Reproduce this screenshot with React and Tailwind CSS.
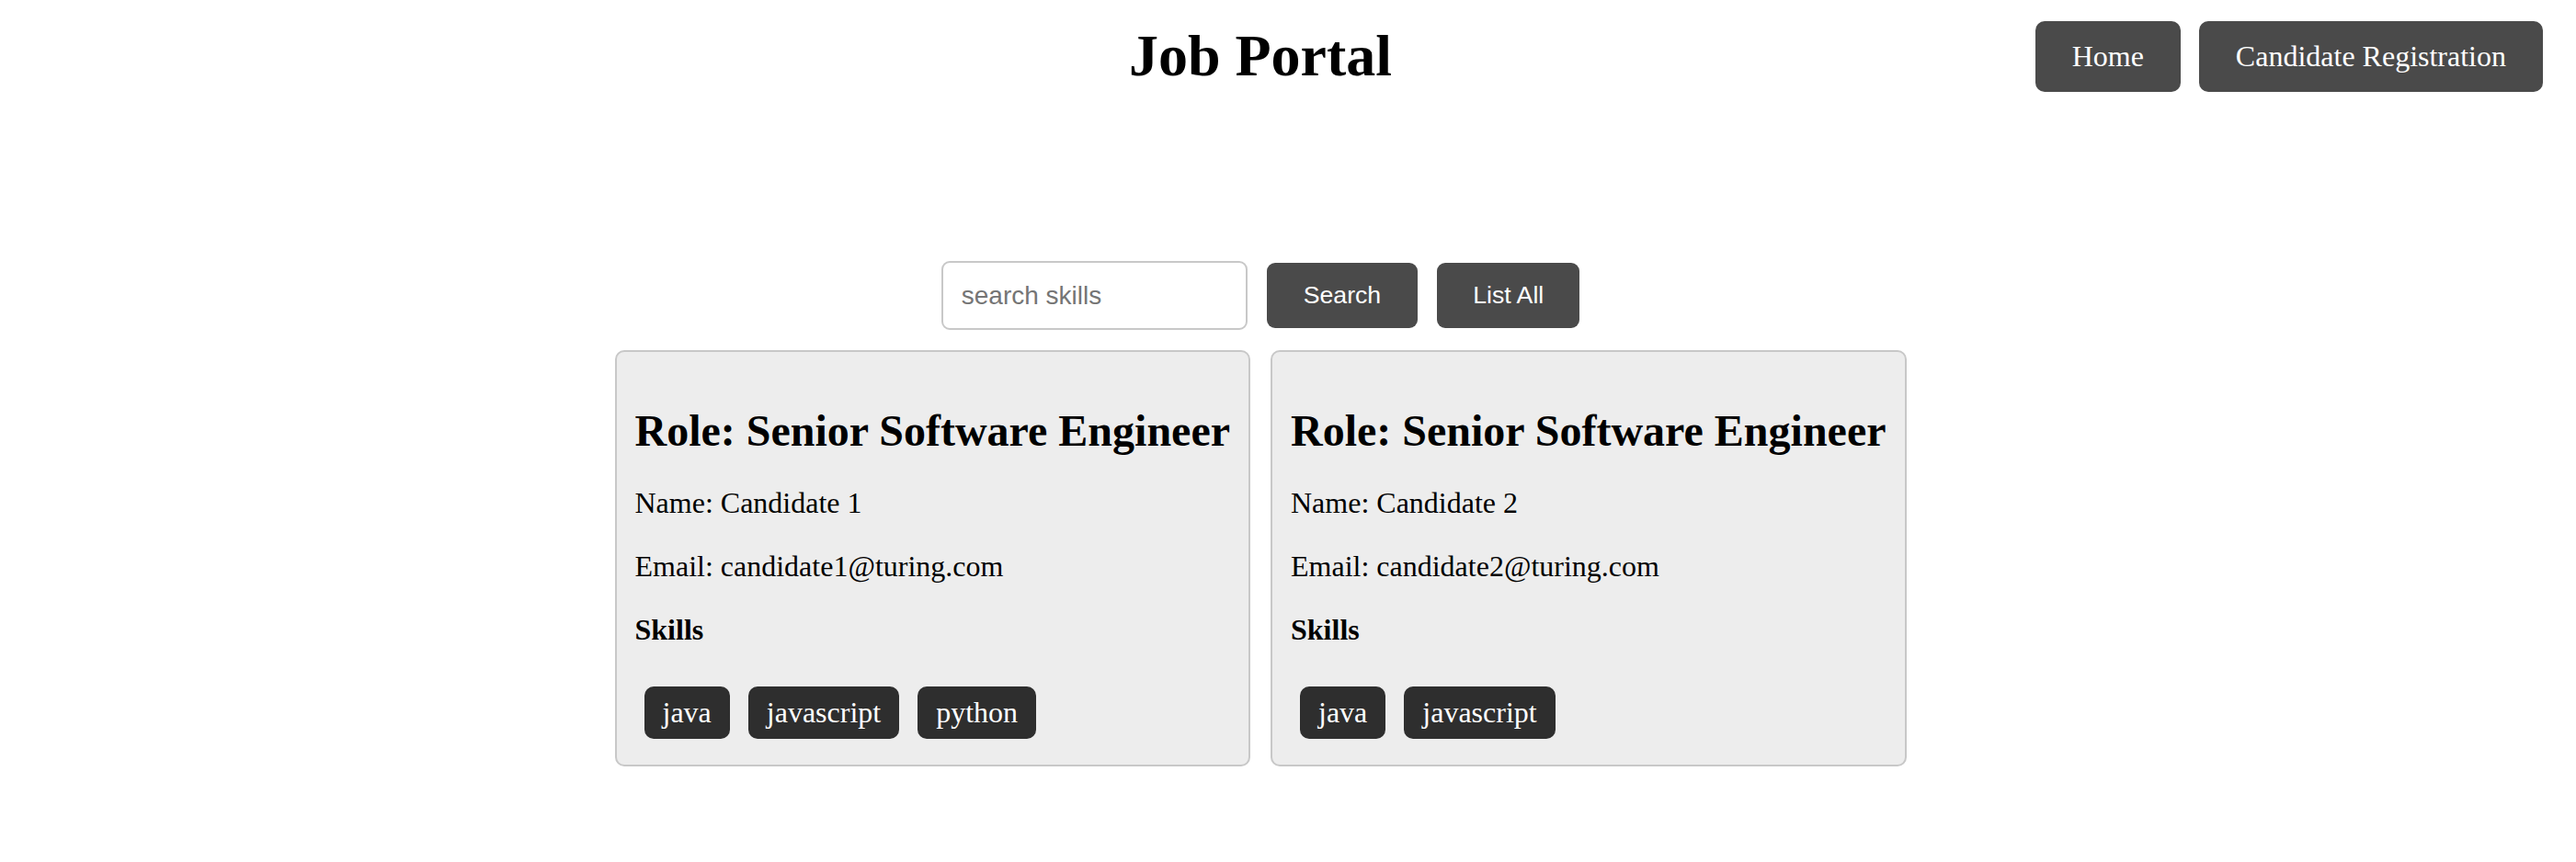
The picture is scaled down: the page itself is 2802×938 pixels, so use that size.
import { useState } from 'react'

const candidates = [
  { id: 1, role: 'Senior Software Engineer', name: 'Candidate 1', email: 'candidate1@turing.com', skills: ['java', 'javascript', 'python'] },
  { id: 2, role: 'Senior Software Engineer', name: 'Candidate 2', email: 'candidate2@turing.com', skills: ['java', 'javascript'] },
]

export default function App() {
  const [query, setQuery] = useState('')

  return (
    <div className="min-h-[938px] bg-white text-black font-['Liberation_Serif','Times_New_Roman',serif]">
      <header className="relative pt-[24px] pr-[60px]">
        <h1 className="text-center text-[64px] leading-[74px] font-bold">Job Portal</h1>
        {/* nav floats in the top right corner */}
        <nav className="absolute top-[23px] right-[36px] flex gap-[20px]">
          <a href="#" className="bg-[#4a4a4a] text-white text-[32px] leading-[37px] px-[40px] py-[20px] rounded-[10px]">Home</a>
          <a href="#" className="bg-[#4a4a4a] text-white text-[32px] leading-[37px] px-[40px] py-[20px] rounded-[10px]">Candidate Registration</a>
        </nav>
      </header>

      <main className="pr-[60px]">
        <div className="mt-[186px] flex items-center justify-center gap-[21px] font-['Liberation_Sans',Arial,sans-serif]">
          <input
            value={query}
            onChange={e => setQuery(e.target.value)}
            placeholder="search skills"
            className="w-[333px] h-[75px] px-[20px] border-2 border-[#c8c8c8] rounded-[9px] text-[28px] text-black placeholder:text-[#757575] outline-none"
          />
          <button className="bg-[#4a4a4a] text-white text-[26.67px] leading-[31px] px-[40px] py-[20px] rounded-[9px]">Search</button>
          <button className="bg-[#4a4a4a] text-white text-[26.67px] leading-[31px] px-[39px] py-[20px] rounded-[9px]">List All</button>
        </div>

        <div className="mt-[22px] flex items-start justify-center gap-[22px]">
          {candidates.map(c => <CandidateCard key={c.id} c={c} />)}
        </div>
      </main>
    </div>
  )
}

function CandidateCard({ c }) {
  return (
    <div className="bg-[#ededed] border-2 border-[#c8c8c8] rounded-[10px] px-[20px] pt-[20px] pb-[28px]">
      <h2 className="mt-[38px] text-[48px] leading-[56px] font-bold whitespace-nowrap">Role: {c.role}</h2>
      <p className="mt-[32px] text-[32px] leading-[37px]">Name: {c.name}</p>
      <p className="mt-[32px] text-[32px] leading-[37px]">Email: {c.email}</p>
      <p className="mt-[32px] text-[32px] leading-[37px] font-bold">Skills</p>
      <div className="mt-[43px] pl-[10px] flex gap-[20px]">
        {c.skills.map(s => (
          <span key={s} className="bg-[#2e2e2e] text-white text-[32px] leading-[37px] px-[20px] py-[10px] rounded-[10px]">{s}</span>
        ))}
      </div>
    </div>
  )
}
